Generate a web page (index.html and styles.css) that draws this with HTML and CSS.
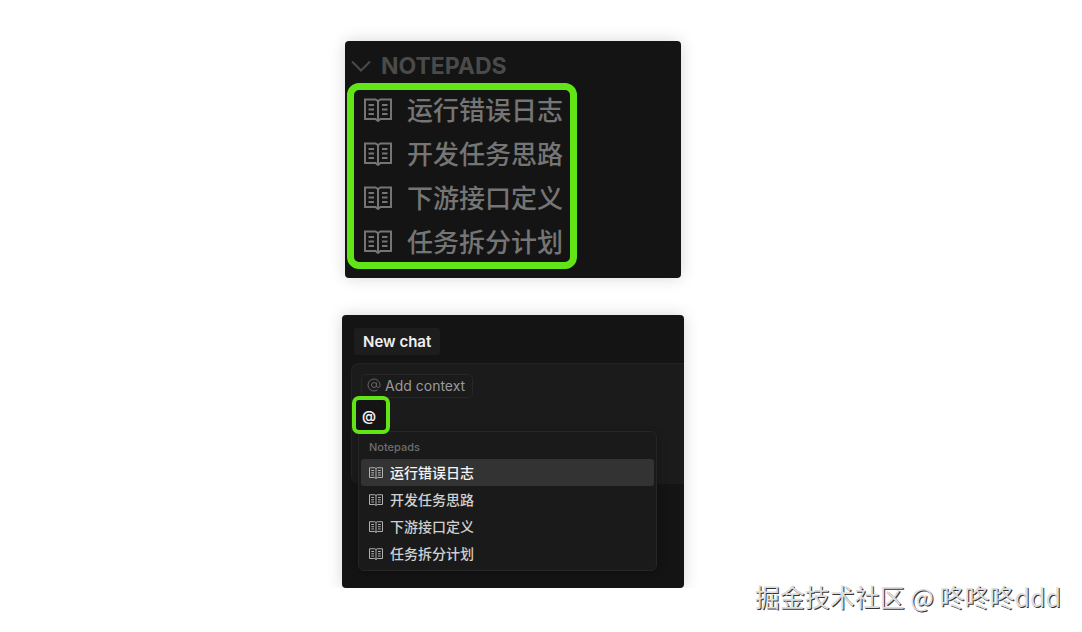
FILE: index.html
```html
<!DOCTYPE html>
<html lang="zh-CN">
<head>
    <meta charset="UTF-8">
    <meta name="viewport" content="width=device-width, initial-scale=1.0">
    <title>Notepads</title>
    <link rel="stylesheet" href="styles.css">
</head>
<body>

<!-- shared icons -->
<svg class="sprite" aria-hidden="true">
    <symbol id="book" viewBox="0 0 28 24">
        <path d="M1 1.500h10.500L14 3l2.500-1.500H27V21H16.500L14 23l-2.500-2H1z"/>
        <path d="M14 3v20M4.500 7H10M4.500 11.500H10M4.500 16H10M18 7h5.500M18 11.500h5.500M18 16h5.500"/>
    </symbol>
</svg>

<main>
    <section class="card sidebar">
        <h2>
            <svg class="chevron" viewBox="0 0 20 12"><path d="M1 1.500l9 9 9-9"/></svg>
            NOTEPADS
        </h2>
        <ul class="notes">
            <li><svg class="book"><use href="#book"/></svg>运行错误日志</li>
            <li><svg class="book"><use href="#book"/></svg>开发任务思路</li>
            <li><svg class="book"><use href="#book"/></svg>下游接口定义</li>
            <li><svg class="book"><use href="#book"/></svg>任务拆分计划</li>
        </ul>
    </section>

    <section class="card chat">
        <button type="button" class="tab">New chat</button>
        <div class="composer">
            <button type="button" class="context">
                <svg class="at" viewBox="0 0 14 14"><circle cx="7" cy="7" r="2.500"/><path d="M9.500 4.500v3.300a1.700 1.700 0 0 0 3.500 0V7a6 6 0 1 0-2.500 4.900"/></svg>
                Add context
            </button>
            <input type="text" class="mention" aria-label="Message" value="@">
            <div class="menu">
                <h3>Notepads</h3>
                <button type="button" class="active"><svg class="book"><use href="#book"/></svg>运行错误日志</button>
                <button type="button"><svg class="book"><use href="#book"/></svg>开发任务思路</button>
                <button type="button"><svg class="book"><use href="#book"/></svg>下游接口定义</button>
                <button type="button"><svg class="book"><use href="#book"/></svg>任务拆分计划</button>
            </div>
        </div>
    </section>
</main>

<footer>掘金技术社区 @ 咚咚咚ddd</footer>

</body>
</html>
```

FILE: styles.css
```css
* {
    box-sizing: border-box;
}
body {
    margin: 0;
    background: #fff;
    font-family: Inter, "Noto Sans CJK SC", sans-serif;
}
h2, h3, ul {
    margin: 0;
    padding: 0;
}
button, input {
    font-family: inherit;
    border: none;
}
.sprite {
    position: absolute;
    width: 0;
    height: 0;
}
svg {
    fill: none;
    stroke: currentColor;
    flex: none;
}
main {
    display: flex;
    flex-direction: column;
    align-items: center;
    gap: 37px;
    padding: 41px 56px 0 0;
}
.card {
    width: 100%;
    background: #141414;
    border-radius: 4px;
    box-shadow: 0 0 16px rgba(0, 0, 0, 0.16);
}

/* sidebar */
.sidebar {
    max-width: 336px;
    padding: 8px 2px 9px;
}
.sidebar h2 {
    display: flex;
    align-items: center;
    gap: 10px;
    padding-left: 4px;
    font-size: 23px;
    line-height: 34px;
    font-weight: 700;
    color: #4a4a4a;
}
.chevron {
    width: 20px;
    height: 12px;
    stroke-width: 2;
}
.notes {
    width: fit-content;
    list-style: none;
    display: grid;
    gap: 12px;
    padding: 5px 7px 3px 10px;
    border: 7px solid #62e516;
    border-radius: 12px;
}
.notes li {
    display: flex;
    align-items: center;
    gap: 15px;
    font-size: 26px;
    line-height: 32px;
    font-weight: 500;
    color: #757575;
}
.notes .book {
    width: 28px;
    height: 24px;
    margin-bottom: 2px;
    stroke-width: 2;
}

/* chat */
.chat {
    max-width: 342px;
    padding: 13px 0 104px 9px;
}
.tab {
    display: block;
    margin-left: 3px;
    padding: 1px 9px 0;
    font-size: 15px;
    line-height: 26px;
    font-weight: 600;
    color: #f0f0f0;
    background: #1d1d1d;
    border-radius: 3px;
}
.composer {
    position: relative;
    min-height: 121px;
    margin-top: 8px;
    padding: 10px 0 0;
    background: #1b1b1b;
    border: 1px solid #232323;
    border-width: 1px 0 0 1px;
    border-radius: 8px 0 0 8px;
}
.context {
    display: flex;
    align-items: center;
    gap: 4px;
    margin-left: 9px;
    padding: 0 7px 0 5px;
    font-size: 14px;
    line-height: 22px;
    color: #9a9a9a;
    background: none;
    border: 1px solid #272727;
    border-radius: 5px;
}
.at {
    width: 14px;
    height: 14px;
    margin-bottom: 2px;
    color: #666;
}
.mention {
    position: absolute;
    z-index: 1;
    top: 32px;
    left: 0;
    width: 38px;
    height: 38px;
    padding: 0 6px;
    font-size: 14px;
    font-weight: 600;
    color: #f0f0f0;
    background: #141414;
    border: 4px solid #62e516;
    border-radius: 7px;
}
.menu {
    position: absolute;
    top: 67px;
    left: 6px;
    right: 27px;
    padding: 3px 2px 3px;
    background: #1a1a1a;
    border: 1px solid #262626;
    border-radius: 6px;
    box-shadow: 0 2px 8px rgba(0, 0, 0, 0.3);
}
.menu h3 {
    padding-left: 8px;
    font-size: 11px;
    line-height: 24px;
    font-weight: 500;
    color: #6e6e6e;
}
.menu button {
    display: flex;
    align-items: center;
    gap: 7px;
    width: 100%;
    padding: 0 8px;
    font-size: 14px;
    line-height: 27px;
    font-weight: 500;
    color: #d0d0d0;
    background: none;
    border-radius: 3px;
}
.menu .active {
    color: #f5f5f5;
    background: #333;
}
.menu .book {
    width: 14px;
    height: 12px;
    stroke-width: 2;
    color: #b0b0b0;
}

footer {
    position: absolute;
    right: 21px;
    bottom: 19px;
    font-family: "Noto Sans CJK SC", sans-serif;
    font-size: 25px;
    line-height: 34px;
    color: #ddd;
    text-shadow: 1px 1px 0 #333;
}
```
